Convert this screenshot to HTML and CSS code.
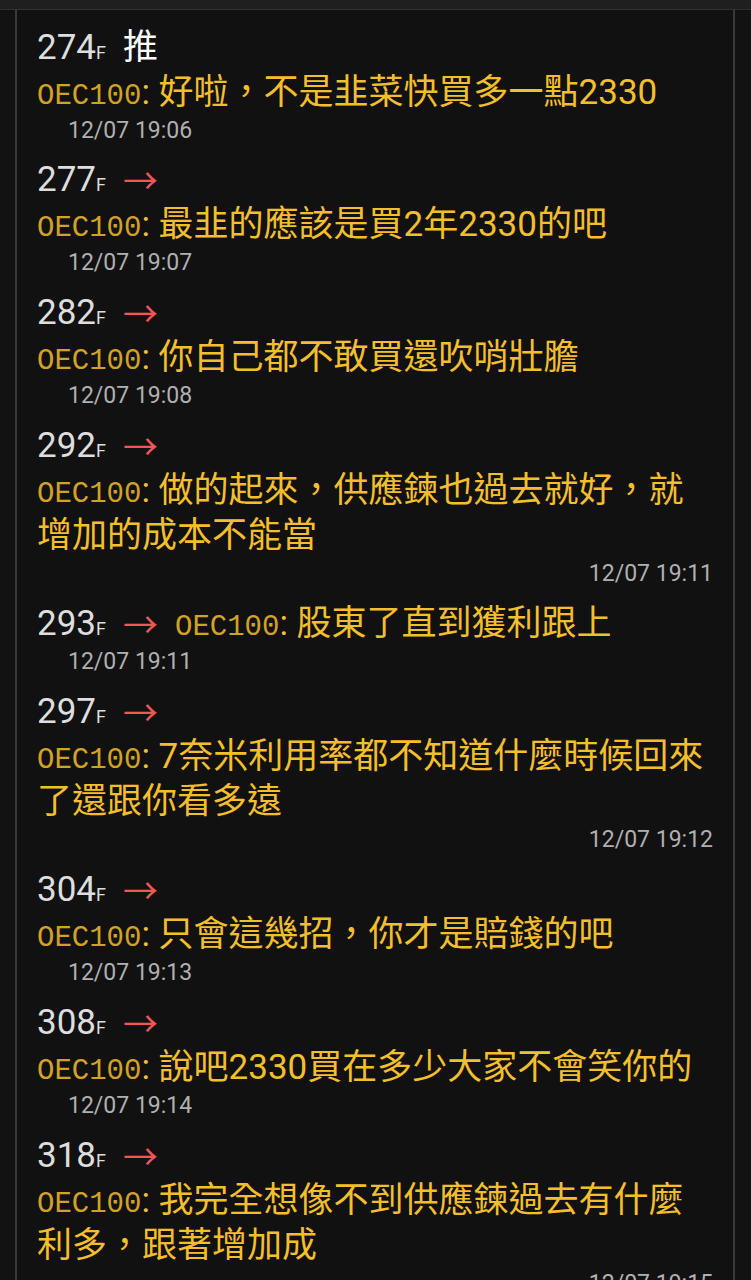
FILE: index.html
```html
<!DOCTYPE html>
<html>
<head>
	<meta charset="utf-8">
	<title>推文</title>
	<link rel="stylesheet" href="styles.css">
</head>
<body>
	<div class="topbar"></div>
	<div class="frame">
		<div class="push">
			<span class="floor">274<small>F</small></span>
			<span class="tag good">推</span>
			<span class="content"><span class="user">OEC100</span>: 好啦，不是韭菜快買多一點2330</span>
			<span class="time">12/07 19:06</span>
		</div>
		<div class="push">
			<span class="floor">277<small>F</small></span>
			<span class="tag"><span class="arrow">→</span></span>
			<span class="content"><span class="user">OEC100</span>: 最韭的應該是買2年2330的吧</span>
			<span class="time">12/07 19:07</span>
		</div>
		<div class="push">
			<span class="floor">282<small>F</small></span>
			<span class="tag"><span class="arrow">→</span></span>
			<span class="content"><span class="user">OEC100</span>: 你自己都不敢買還吹哨壯膽</span>
			<span class="time">12/07 19:08</span>
		</div>
		<div class="push">
			<span class="floor">292<small>F</small></span>
			<span class="tag"><span class="arrow">→</span></span>
			<span class="content"><span class="user">OEC100</span>: 做的起來，供應鍊也過去就好，就增加的成本不能當</span>
			<span class="time right">12/07 19:11</span>
		</div>
		<div class="push">
			<span class="floor">293<small>F</small></span>
			<span class="tag"><span class="arrow">→</span></span>
			<span class="content"><span class="user">OEC100</span>: 股東了直到獲利跟上</span>
			<span class="time">12/07 19:11</span>
		</div>
		<div class="push">
			<span class="floor">297<small>F</small></span>
			<span class="tag"><span class="arrow">→</span></span>
			<span class="content"><span class="user">OEC100</span>: 7奈米利用率都不知道什麼時候回來了還跟你看多遠</span>
			<span class="time right">12/07 19:12</span>
		</div>
		<div class="push">
			<span class="floor">304<small>F</small></span>
			<span class="tag"><span class="arrow">→</span></span>
			<span class="content"><span class="user">OEC100</span>: 只會這幾招，你才是賠錢的吧</span>
			<span class="time">12/07 19:13</span>
		</div>
		<div class="push">
			<span class="floor">308<small>F</small></span>
			<span class="tag"><span class="arrow">→</span></span>
			<span class="content"><span class="user">OEC100</span>: 說吧2330買在多少大家不會笑你的</span>
			<span class="time">12/07 19:14</span>
		</div>
		<div class="push">
			<span class="floor">318<small>F</small></span>
			<span class="tag"><span class="arrow">→</span></span>
			<span class="content"><span class="user">OEC100</span>: 我完全想像不到供應鍊過去有什麼利多，跟著增加成</span>
			<span class="time right">12/07 19:15</span>
		</div>
	</div>
</body>
</html>
```

FILE: styles.css
```css
html, body {
	margin: 0;
	background-color: #121212;
	overflow: hidden;
}
body {
	font-family: Roboto, "Noto Sans CJK TC", sans-serif;
	font-size: 35px;
	line-height: 45px;
}
.topbar {
	height: 9px;
	background-color: #1f1f1f;
	border-bottom: 1px solid #333;
}
.frame {
	margin: 0 16px 0 15px;
	min-height: 1300px;
	border-left: 2px solid #3a3a3a;
	border-right: 2px solid #3a3a3a;
	background-color: #111;
	padding: 14.5px 20px 0 20px;
}
.push {
	display: flex;
	flex-wrap: wrap;
	align-items: baseline;
	column-gap: 17px;
	padding-bottom: 10.9px;
}
.floor {
	color: #dedede;
}
.floor small {
	font-size: 18px;
	line-height: 1;
}
.tag {
	color: #fff;
}
.arrow {
	font-family: "Noto Sans CJK TC", sans-serif;
	line-height: 1;
	vertical-align: -3px;
	color: #f25757;
}
.content {
	max-width: 100%;
	color: #f5bf2c;
}
.user {
	font-family: "Liberation Mono", monospace;
	font-size: 29px;
	line-height: 1;
	color: #d2a226;
}
.time {
	width: 100%;
	box-sizing: border-box;
	padding-left: 31px;
	font-size: 23px;
	line-height: 32px;
	color: #b0b0b0;
}
.time.right {
	text-align: right;
	padding-left: 0;
}
```
